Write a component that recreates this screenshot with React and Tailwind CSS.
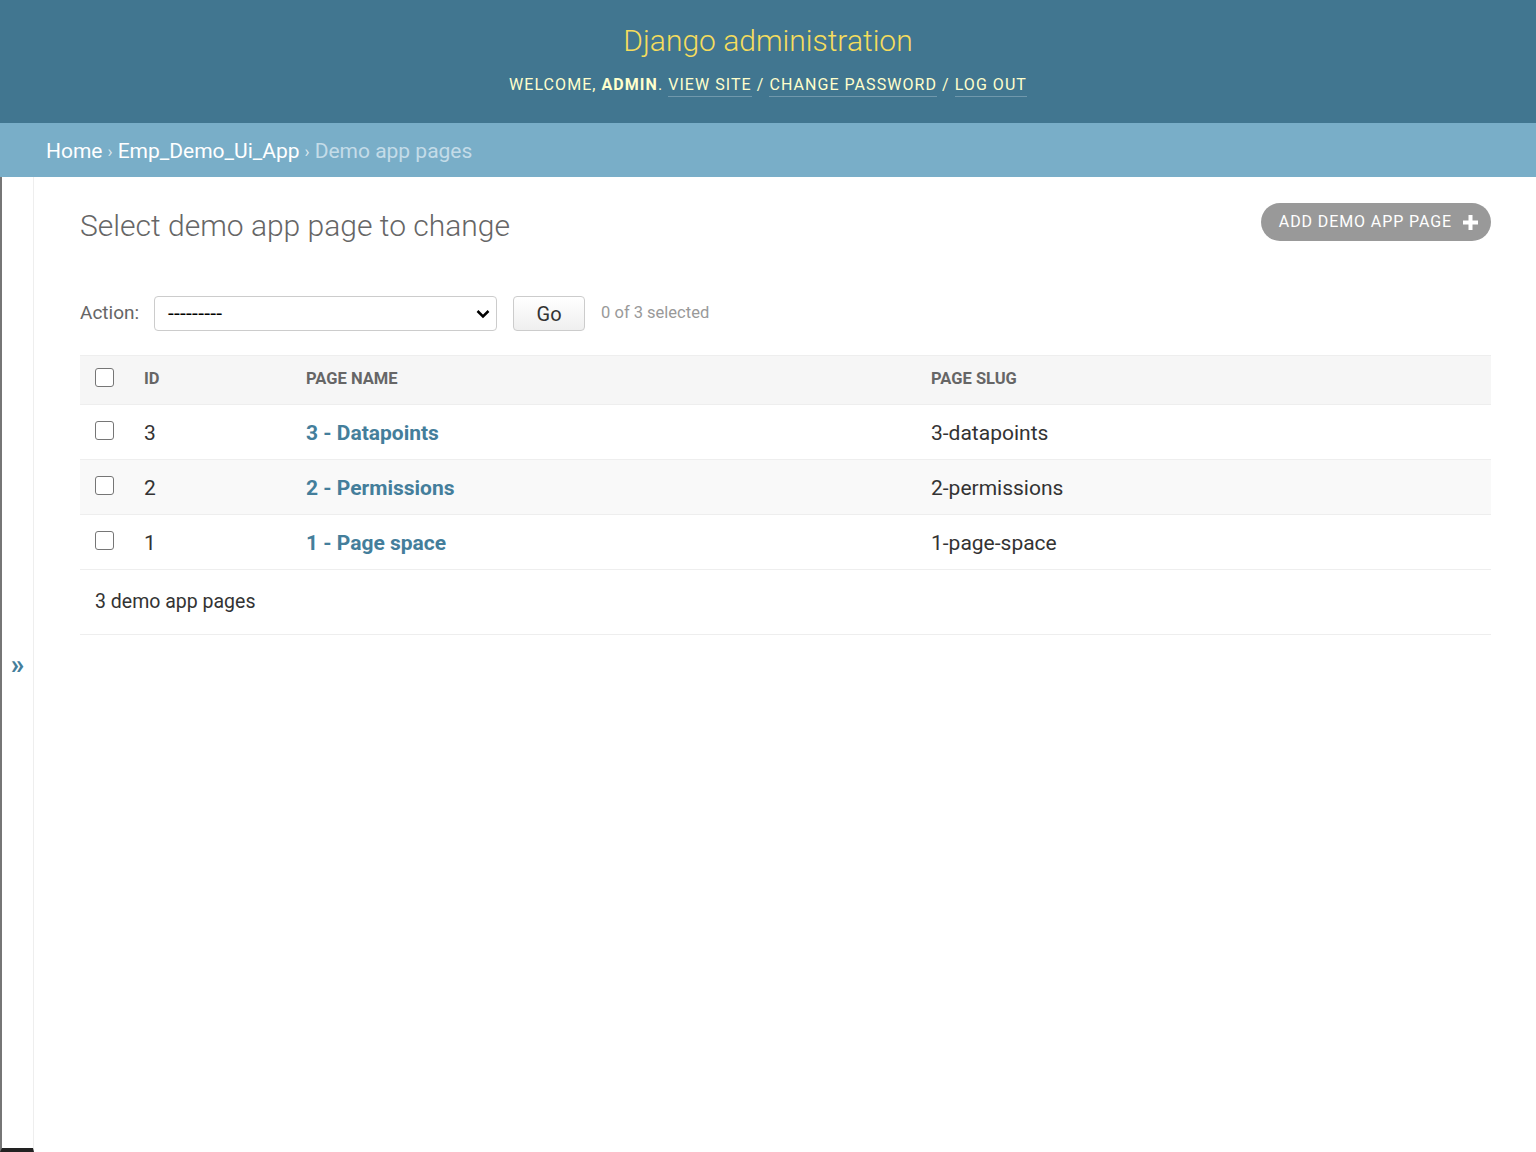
import React from "react";

const rows = [
  { id: 3, name: "3 - Datapoints", slug: "3-datapoints" },
  { id: 2, name: "2 - Permissions", slug: "2-permissions" },
  { id: 1, name: "1 - Page space", slug: "1-page-space" },
];

function Box() {
  return <span className="block w-[19px] h-[19px] rounded-[3px] border-[1.5px] border-[#767676] bg-white" />;
}

export default function App() {
  return (
    <div className="min-h-[1152px] bg-white text-[#333] font-['Roboto',sans-serif] flex flex-col">
      {/* Header */}
      <header className="h-[123px] bg-[#417690] flex flex-col items-center">
        <h1 className="mt-[21px] text-[30px] leading-[40px] font-light text-[#f5dd5d]">Django administration</h1>
        <div className="mt-[13px] text-[16px] leading-[22px] tracking-[1.05px] uppercase text-[#ffc]">
          Welcome, <strong className="font-bold">admin</strong>.{" "}
          <a className="border-b border-[#ffffff40] pb-[2px]">View site</a> /{" "}
          <a className="border-b border-[#ffffff40] pb-[2px]">Change password</a> /{" "}
          <a className="border-b border-[#ffffff40] pb-[2px]">Log out</a>
        </div>
      </header>

      {/* Breadcrumbs */}
      <nav className="h-[54px] bg-[#79aec8] flex items-center pl-[46px] pt-[4px] text-[21px] text-white">
        <a>Home</a>
        <span className="mx-[5px] text-[#dde9f0] text-[17px]">›</span>
        <a>Emp_Demo_Ui_App</a>
        <span className="mx-[5px] text-[#dde9f0] text-[17px]">›</span>
        <span className="text-[#c4dce8]">Demo app pages</span>
      </nav>

      <div className="flex flex-1">
        {/* Sidebar toggle */}
        <div className="w-[34px] shrink-0 border-l-[2px] border-[#767676] border-r border-r-[#eee] border-b-[4px] border-b-[#222] flex items-center justify-center">
          <span className="text-[#447e9b] text-[27px] font-bold leading-none mt-[6px]">»</span>
        </div>

        {/* Content */}
        <main className="flex-1 pl-[46px] pr-[45px] pt-[26px]">
          <div className="flex items-start justify-between">
            <h2 className="mt-[3px] text-[30px] leading-[40px] font-light text-[#666]">Select demo app page to change</h2>
            <a className="h-[38px] pl-[18px] pr-[13px] rounded-full bg-[#999] text-white text-[16px] tracking-[0.9px] uppercase flex items-center gap-[11px]">
              Add demo app page
              <svg width="15" height="15" viewBox="0 0 15 15">
                <path d="M5.5 0h4v5.5h5.5v4h-5.5v5.5h-4v-5.5h-5.5v-4h5.5z" fill="white" />
              </svg>
            </a>
          </div>

          {/* Actions */}
          <div className="mt-[50px] flex items-center h-[35px]">
            <span className="text-[19px] text-[#666]">Action:</span>
            <div className="ml-[15px] w-[343px] h-[35px] border border-[#ccc] rounded-[4px] flex items-center justify-between pl-[13px] pr-[6px]">
              <span className="text-[21px] text-black leading-none tracking-[0.2px]">---------</span>
              <svg width="14" height="10" viewBox="0 0 14 10">
                <path d="M1.5 2l5.5 5.5 5.5-5.5" fill="none" stroke="black" strokeWidth="2.5" />
              </svg>
            </div>
            <button className="ml-[16px] w-[72px] h-[35px] border border-[#ccc] rounded-[4px] bg-gradient-to-b from-white to-[#efefef] text-[20px] text-[#333]">Go</button>
            <span className="ml-[16px] text-[16.5px] text-[#999]">0 of 3 selected</span>
          </div>

          {/* Table */}
          <div className="mt-[24px] border-t border-[#eee]">
            <div className="h-[49px] bg-[#f6f6f6] flex items-center border-b border-[#eee] text-[16.5px] font-bold text-[#666] uppercase">
              <div className="w-[64px] pl-[15px] -mt-[5px]"><Box /></div>
              <div className="w-[162px] -mt-[2px]">ID</div>
              <div className="w-[625px] -mt-[2px]">Page name</div>
              <div className="flex-1 -mt-[2px]">Page slug</div>
            </div>
            {rows.map((r, i) => (
              <div
                key={r.id}
                className={`h-[55px] flex items-center border-b border-[#eee] text-[21px] ${i === 1 ? "bg-[#f9f9f9]" : "bg-white"}`}
              >
                <div className="w-[64px] pl-[15px] -mt-[4px]"><Box /></div>
                <div className="w-[162px] pt-[4px]">{r.id}</div>
                <div className="w-[625px] pt-[4px] font-bold text-[#447e9b]">{r.name}</div>
                <div className="flex-1 pt-[4px]">{r.slug}</div>
              </div>
            ))}
            <div className="h-[65px] flex items-center pl-[15px] border-b border-[#eee] text-[19.5px] text-[#333]">3 demo app pages</div>
          </div>
        </main>
      </div>
    </div>
  );
}
